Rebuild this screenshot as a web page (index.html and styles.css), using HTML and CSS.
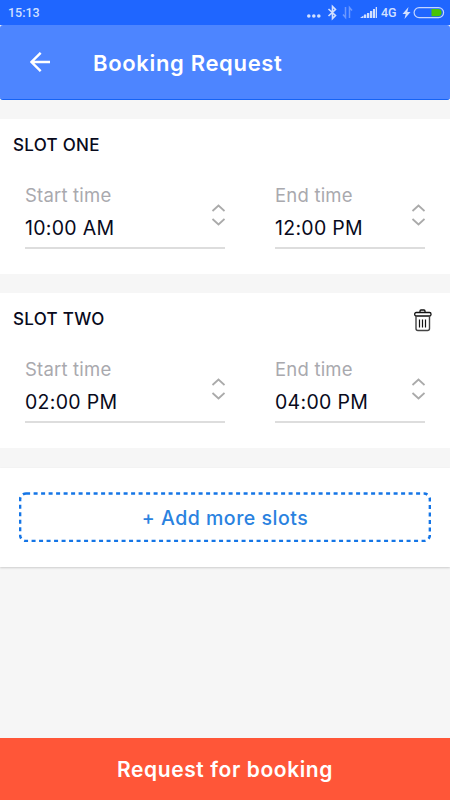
FILE: index.html
```
<!DOCTYPE html>
<html lang="en">
<head>
<meta charset="utf-8">
<title>Booking Request</title>
<link rel="stylesheet" href="styles.css">
</head>
<body>
<div class="app">
  <div class="status">
    <span class="clock">15:13</span>
    <svg class="indicators" width="142" height="25" viewBox="0 0 142 25" fill="#d2e0ff">
      <circle cx="1.800" cy="16" r="1.800"/><circle cx="6.800" cy="16" r="1.800"/><circle cx="11.800" cy="16" r="1.800"/>
      <path d="M21.500 9l7 6.500-3 3V6.500l3 3-7 6.500" fill="none" stroke="#d2e0ff" stroke-width="1.600"/>
      <path d="M38.500 7v10.500l-2.500-3M42.500 18V7.500l2.500 3" fill="none" stroke="#6c99ff" stroke-width="1.500"/>
      <path d="M53 18l3.500-2.500V18zM57 14.500h2.300V18H57zM60 13h2.300v5H60zM63 11h2.300v7H63zM66 9h2v9h-2zM68.700 7h1.300v11h-1.300z"/>
      <path d="M101.500 7l-6 7h3.200l-1.200 5 6-7h-3.200z"/>
      <rect x="107.100" y="7.600" width="29.500" height="10" rx="5" fill="none" stroke="#c3d5ff" stroke-width="1.200"/>
      <path d="M124.500 9h6.500a3.600 3.600 0 0 1 0 7.200h-6.500z" fill="#48c404"/>
    </svg>
    <span class="network">4G</span>
  </div>
  <header class="header">
    <svg class="back" width="20" height="20" viewBox="0 0 20 20" fill="none" stroke="#fff" stroke-width="2.400"><path d="M20 10H1.500M10.700 .8L1.500 10l9.200 9.200"/></svg>
    <h1 class="title">Booking Request</h1>
  </header>
  <main class="content">
    <section class="slot">
      <div class="slot-head"><h2 class="slot-name">SLOT ONE</h2></div>
      <div class="fields">
        <div class="field">
          <div><div class="label">Start time</div><div class="time">10:00 AM</div></div>
          <svg class="stepper" width="14" height="22" viewBox="0 0 14 22"><path d="M1.500 7l6-5.500 6 5.500M1.500 15l6 5.500 6-5.500"/></svg>
        </div>
        <div class="field">
          <div><div class="label">End time</div><div class="time">12:00 PM</div></div>
          <svg class="stepper" width="14" height="22" viewBox="0 0 14 22"><path d="M1.500 7l6-5.500 6 5.500M1.500 15l6 5.500 6-5.500"/></svg>
        </div>
      </div>
    </section>
    <section class="slot">
      <div class="slot-head">
        <h2 class="slot-name">SLOT TWO</h2>
        <svg class="trash" width="18" height="23" viewBox="0 0 18 23" fill="none" stroke="#111"><path d="M6 3V2q0-1 1-1h3q1 0 1 1v1" stroke-width="1.300"/><rect x=".7" y="3.500" width="16.300" height="3.500" rx="1.500" stroke-width="1.300"/><path d="M2 7v12.500q0 2 2 2h9.500q2 0 2-2V7" stroke="#444" stroke-width="1.400"/><path d="M5.500 10.500v8M8.500 10.500v8M11.500 10.500v8" stroke-width="1.200"/></svg>
      </div>
      <div class="fields">
        <div class="field">
          <div><div class="label">Start time</div><div class="time">02:00 PM</div></div>
          <svg class="stepper" width="14" height="22" viewBox="0 0 14 22"><path d="M1.500 7l6-5.500 6 5.500M1.500 15l6 5.500 6-5.500"/></svg>
        </div>
        <div class="field">
          <div><div class="label">End time</div><div class="time">04:00 PM</div></div>
          <svg class="stepper" width="14" height="22" viewBox="0 0 14 22"><path d="M1.500 7l6-5.500 6 5.500M1.500 15l6 5.500 6-5.500"/></svg>
        </div>
      </div>
    </section>
    <section class="more">
      <button class="add">
        <svg class="outline" width="412" height="50" viewBox="0 0 412 50"><rect x="1.100" y="1.500" width="409.800" height="47.500" rx="6"/></svg>
        <span class="add-text">+ Add more slots</span>
      </button>
    </section>
  </main>
  <button class="submit">Request for booking</button>
</div>
</body>
</html>
```

FILE: styles.css
```
* { box-sizing: border-box; }
body { margin: 0; font-family: Inter, "Liberation Sans", sans-serif; }
h1, h2 { margin: 0; }
button { border: 0; padding: 0; font-family: inherit; }
.app { width: 450px; height: 800px; display: flex; flex-direction: column; background: #f6f6f6; overflow: hidden; }
.status { position: relative; height: 25px; flex: none; background: #1f66ff; color: #d2e0ff; display: flex; justify-content: space-between; padding: 0 0 0 8px; font: 500 12.500px/25px Roboto, sans-serif; }
.indicators { display: block; margin-right: 1px; }
.network { position: absolute; left: 381px; top: 0; font-size: 12.500px; }
.header { height: 75px; flex: none; display: flex; align-items: center; background: #4d85ff; border-bottom: 1px solid #1563f5; border-radius: 3px; padding: 0 0 0 30px; }
.back { margin-right: 43px; }
.title { color: #fff; font-size: 22px; font-weight: 600; line-height: 28px; letter-spacing: .67px; padding-top: 1px; white-space: nowrap; }
.content { flex: 1; display: flex; flex-direction: column; gap: 19px; padding-top: 19px; }
.slot { height: 155px; background: #fff; padding: 15px 18px 0 13px; }
.slot-head { display: flex; justify-content: space-between; height: 48px; }
.slot-name { font-size: 17px; line-height: 21px; font-weight: 500; color: #080a1c; letter-spacing: .3px; padding-top: 1px; }
.trash { margin-top: 1px; }
.fields { display: grid; grid-template-columns: 200px 150px; gap: 50px; margin-left: 12px; }
.field { height: 67px; border-bottom: 2px solid #ddd; display: flex; justify-content: space-between; }
.label { font-size: 18.500px; line-height: 26px; color: #a9a9ae; letter-spacing: .2px; white-space: nowrap; }
.time { font-size: 19.500px; line-height: 28px; margin-top: 6px; color: #080a1c; letter-spacing: .3px; white-space: nowrap; }
.stepper { margin-top: 22px; fill: none; stroke: #aaa; stroke-width: 1.800; }
.more { height: 99px; margin-top: 1px; background: #fff; padding: 24px 19px 0; box-shadow: 0 1px 2px #ccc; }
.add { display: grid; place-items: center; width: 412px; height: 50px; background: none; }
.outline, .add-text { grid-area: 1 / 1; }
.outline { fill: none; stroke: #1475e6; stroke-width: 2.500; stroke-dasharray: 4 3.500; }
.add-text { font-size: 19.500px; font-weight: 500; color: #2a82e0; letter-spacing: .5px; padding-top: 2px; }
.submit { height: 62px; flex: none; background: #ff5638; color: #fff; font-size: 21px; font-weight: 600; letter-spacing: .6px; padding-top: 1px; }
```
